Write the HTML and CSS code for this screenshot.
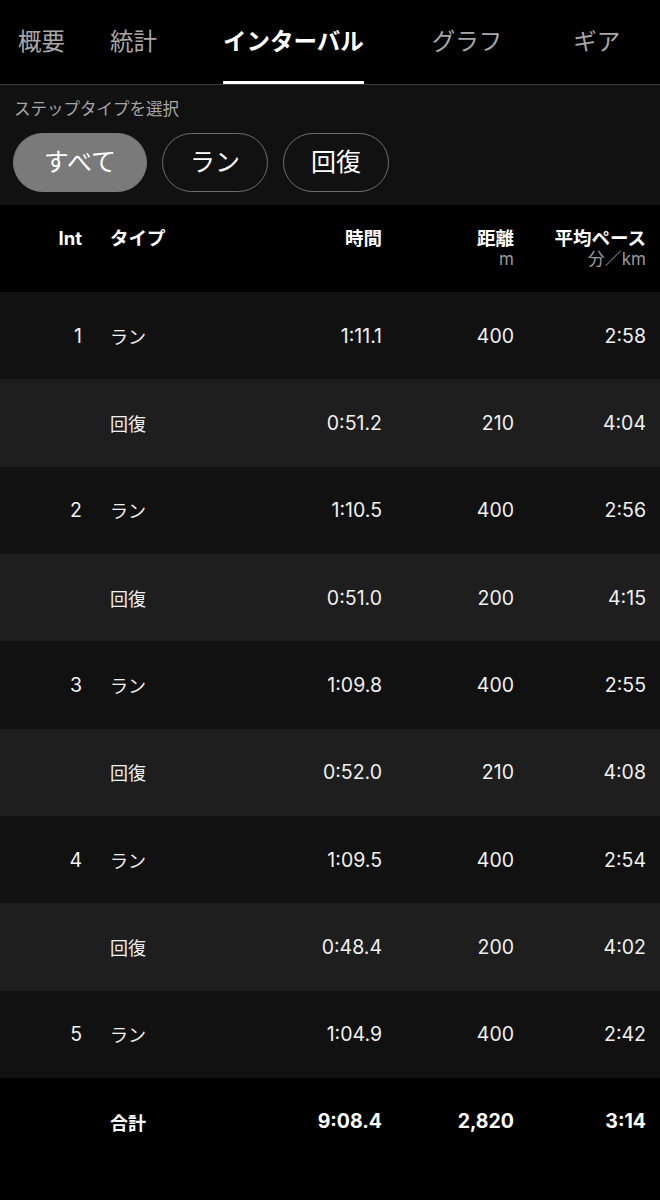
FILE: index.html
```html
<!DOCTYPE html>
<html lang="ja">
<head>
<meta charset="utf-8">
<link rel="stylesheet" href="styles.css">
</head>
<body>
<div class="app">
  <nav class="tabs">
    <div class="tab t1">概要</div>
    <div class="tab t2">統計</div>
    <div class="tab t3 active">インターバル</div>
    <div class="tab t4">グラフ</div>
    <div class="tab t5">ギア</div>
  </nav>
  <section class="filter">
    <div class="filter-label">ステップタイプを選択</div>
    <div class="chips">
      <div class="chip selected">すべて</div>
      <div class="chip">ラン</div>
      <div class="chip">回復</div>
    </div>
  </section>
  <div class="table">
    <div class="row head">
      <div class="c int">Int</div>
      <div class="c type">タイプ</div>
      <div class="c num">時間</div>
      <div class="c num">距離<span class="unit">m</span></div>
      <div class="c num">平均ペース<span class="unit">分／km</span></div>
    </div>
    <div class="row odd"><div class="c int">1</div><div class="c type">ラン</div><div class="c num">1:11.1</div><div class="c num">400</div><div class="c num">2:58</div></div>
    <div class="row even"><div class="c int"></div><div class="c type">回復</div><div class="c num">0:51.2</div><div class="c num">210</div><div class="c num">4:04</div></div>
    <div class="row odd"><div class="c int">2</div><div class="c type">ラン</div><div class="c num">1:10.5</div><div class="c num">400</div><div class="c num">2:56</div></div>
    <div class="row even"><div class="c int"></div><div class="c type">回復</div><div class="c num">0:51.0</div><div class="c num">200</div><div class="c num">4:15</div></div>
    <div class="row odd"><div class="c int">3</div><div class="c type">ラン</div><div class="c num">1:09.8</div><div class="c num">400</div><div class="c num">2:55</div></div>
    <div class="row even"><div class="c int"></div><div class="c type">回復</div><div class="c num">0:52.0</div><div class="c num">210</div><div class="c num">4:08</div></div>
    <div class="row odd"><div class="c int">4</div><div class="c type">ラン</div><div class="c num">1:09.5</div><div class="c num">400</div><div class="c num">2:54</div></div>
    <div class="row even"><div class="c int"></div><div class="c type">回復</div><div class="c num">0:48.4</div><div class="c num">200</div><div class="c num">4:02</div></div>
    <div class="row odd"><div class="c int">5</div><div class="c type">ラン</div><div class="c num">1:04.9</div><div class="c num">400</div><div class="c num">2:42</div></div>
    <div class="row total"><div class="c int"></div><div class="c type">合計</div><div class="c num">9:08.4</div><div class="c num">2,820</div><div class="c num">3:14</div></div>
  </div>
</div>
</body>
</html>
```

FILE: styles.css
```css
* { box-sizing: border-box; }
html, body { margin: 0; padding: 0; background: #000; }
body {
  width: 660px;
  height: 1200px;
  overflow: hidden;
  font-family: Inter, "Noto Sans CJK JP", sans-serif;
  color: #fff;
}
.app { display: flex; flex-direction: column; height: 1200px; }

.tabs {
  display: flex;
  height: 85px;
  background: #000;
  border-bottom: 1px solid #3a3a3a;
}
.tab {
  position: relative;
  font-size: 23.5px;
  color: #a8a8a8;
  line-height: 84px;
  white-space: nowrap;
}
.t1 { margin-left: 18px; }
.t2 { margin-left: 45px; }
.t3 { margin-left: 66px; }
.t4 { margin-left: 68px; }
.t5 { margin-left: 71px; }
.tab.active { color: #fff; font-weight: 700; }
.tab.active::after {
  content: "";
  position: absolute;
  left: 0;
  right: 0;
  bottom: 0;
  height: 3px;
  background: #fff;
}

.filter {
  background: #111;
  padding: 12px 0 12px 14px;
  height: 120px;
}
.filter-label {
  font-size: 16.5px;
  color: #a6a6a6;
  line-height: 24px;
}
.chips {
  display: flex;
  gap: 15px;
  margin-top: 12px;
  margin-left: -1px;
}
.chip {
  height: 59px;
  border-radius: 30px;
  border: 1.5px solid #6e6e6e;
  font-size: 25px;
  line-height: 56px;
  width: 106px;
  text-align: center;
  color: #fff;
}
.chip.selected {
  background: #7a7a7a;
  border-color: #7a7a7a;
  width: 134px;
}

.table { display: flex; flex-direction: column; }
.row {
  display: grid;
  grid-template-columns: 110px 140px 1fr 132px 132px;
  padding-right: 14px;
  height: 87.33px;
  align-items: center;
  font-size: 19.5px;
  color: #f0f0f0;
}
.row.odd { background: #111; }
.row.even { background: #1e1e1e; }
.c { white-space: nowrap; }
.type { font-size: 18px; }
.int { text-align: right; padding-right: 28px; }
.num { text-align: right; }
.row.head {
  background: #000;
  align-items: start;
  padding-top: 21px;
  height: 87px;
  font-weight: 700;
  font-size: 18.5px;
  line-height: 24px;
  color: #fff;
}
.row.head .type { font-size: 18.5px; }
.unit {
  display: block;
  font-weight: 400;
  font-size: 17px;
  line-height: 19px;
  color: #9a9a9a;
}
.row.total {
  background: #000;
  height: 122px;
  align-items: start;
  padding-top: 31px;
  font-weight: 700;
  color: #fff;
}
```
